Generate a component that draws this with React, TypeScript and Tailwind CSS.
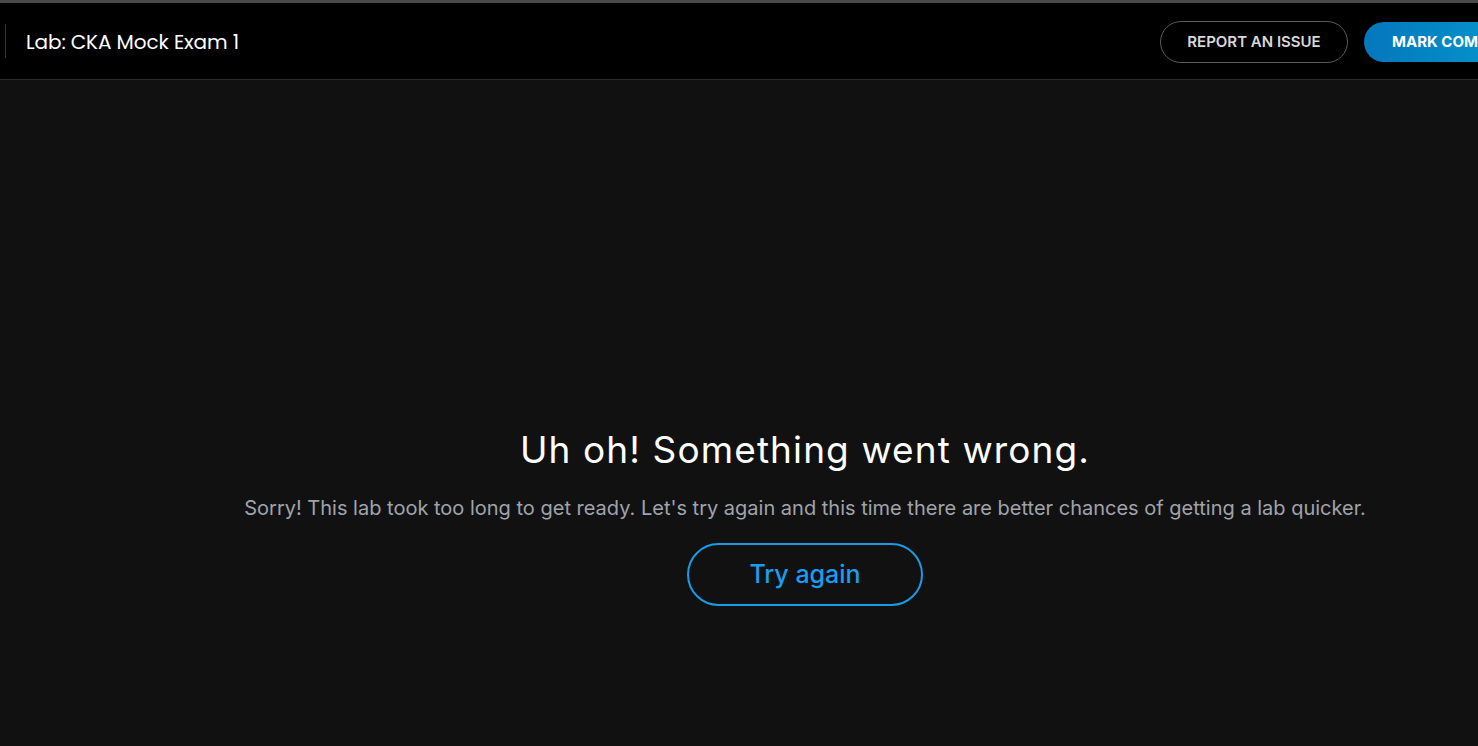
export default function App() {
  return (
    <div className="flex h-[746px] w-full flex-col overflow-hidden bg-[#111111] font-['Inter',sans-serif]">
      <div className="h-[3px] shrink-0 bg-[#4a4a4a]" />
      <header className="flex h-[77px] shrink-0 items-center border-b border-[#2a2a2a] bg-black">
        <div className="ml-[5px] h-[34px] w-px bg-[#3a3a3a]" />
        <h1 className="ml-[20px] mt-[1px] font-['Poppins','Inter',sans-serif] text-[20px] tracking-[-0.1px] text-white">
          Lab: CKA Mock Exam 1
        </h1>
        <div className="ml-auto mt-[2px] flex items-center gap-[16px]">
          <button className="h-[42px] w-[188px] rounded-full border border-[#5a5a5a] pt-[1px] text-[15px] font-semibold uppercase text-[#d8d8d8]">
            Report an issue
          </button>
          <div className="h-[40px] w-[114px] overflow-hidden">
            <button className="h-[40px] w-[200px] whitespace-nowrap rounded-l-full bg-gradient-to-r from-[#0577bd] to-[#0aa1cf] pl-[28px] pt-[1px] text-left text-[15px] font-bold uppercase text-white">
              Mark complete
            </button>
          </div>
        </div>
      </header>
      <main className="flex flex-1 flex-col items-center pl-[132px] pt-[348px]">
        <h2 className="text-[37px] leading-[44px] tracking-[1.1px] text-white">Uh oh! Something went wrong.</h2>
        <p className="mt-[22px] text-[20px] leading-[28px] text-[#a0a4ab]">
          Sorry! This lab took too long to get ready. Let's try again and this time there are better chances of getting a lab quicker.
        </p>
        <button className="mt-[21px] h-[63px] w-[236px] rounded-full border-2 border-[#1a9be6] text-[25px] font-medium text-[#1b9cf0]">
          Try again
        </button>
      </main>
    </div>
  );
}
